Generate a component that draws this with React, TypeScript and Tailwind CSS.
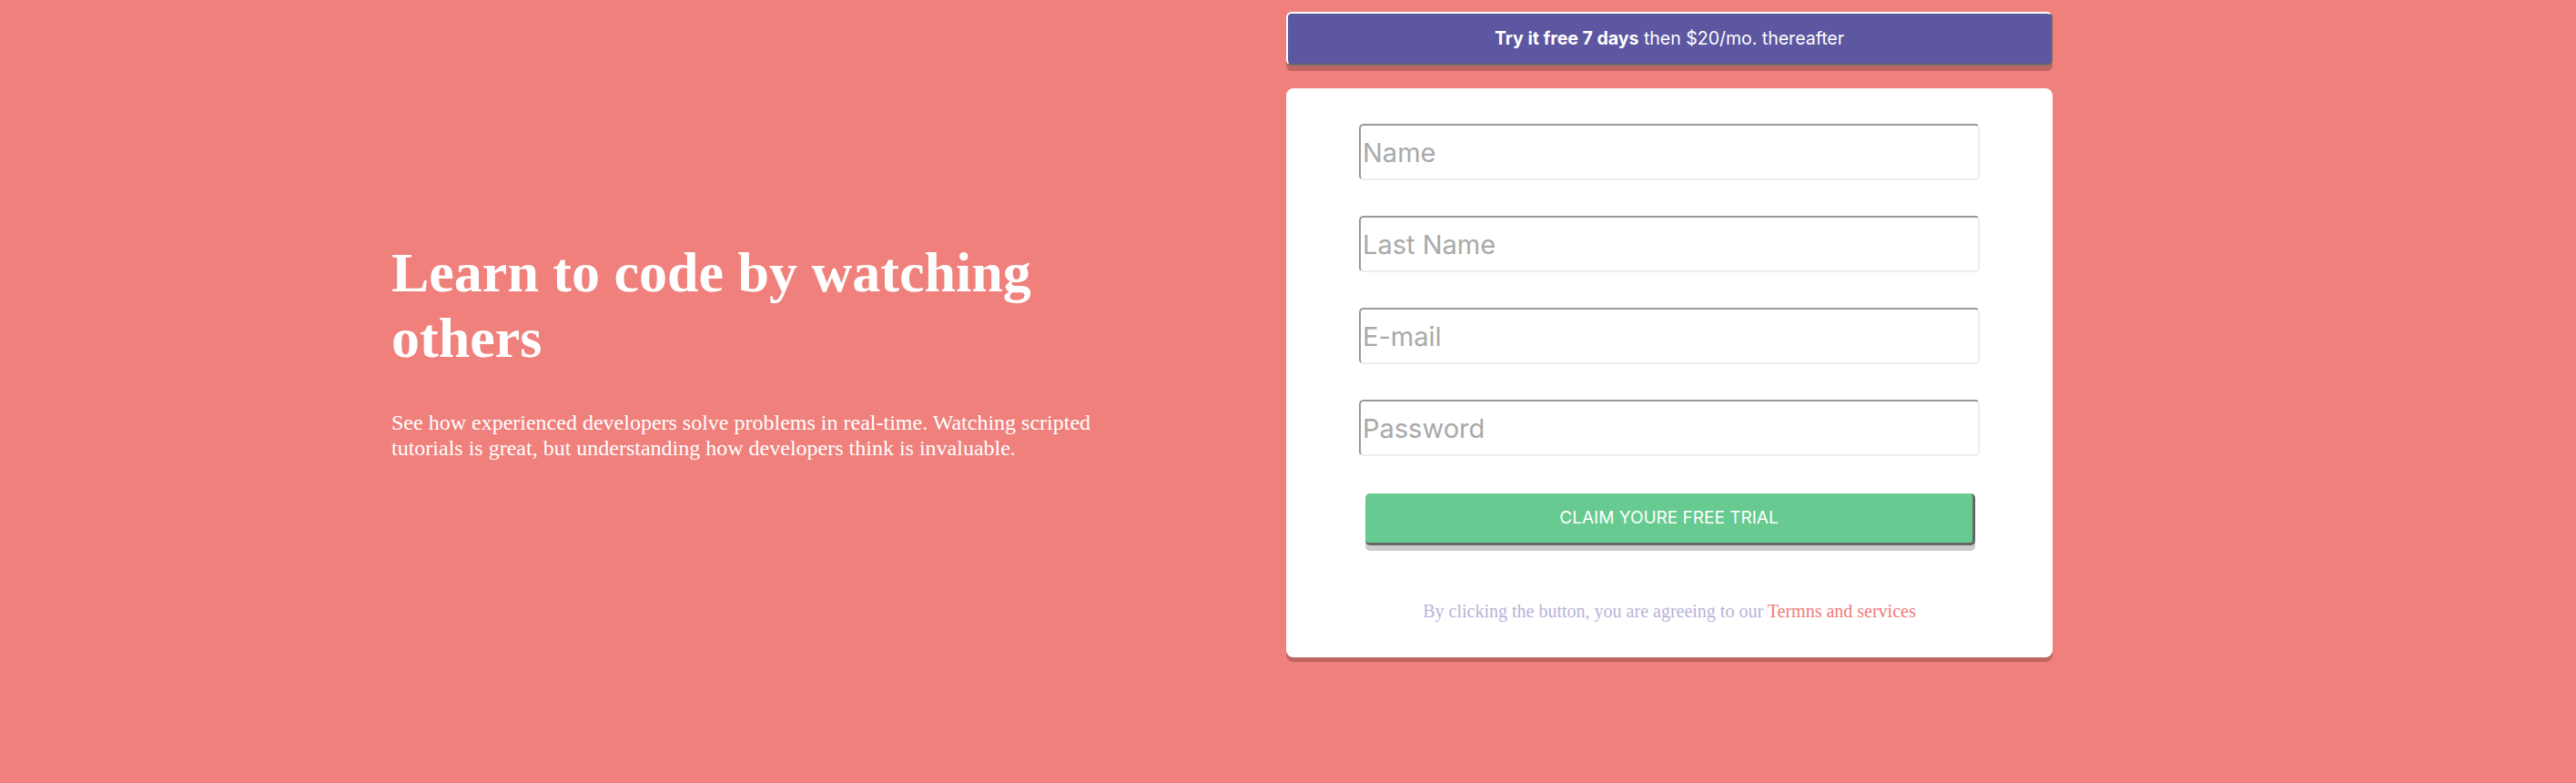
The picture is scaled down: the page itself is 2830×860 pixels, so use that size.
const fields = ["Name", "Last Name", "E-mail", "Password"];

const Field = ({ placeholder }: { placeholder: string }) => (
  <input
    type="text"
    placeholder={placeholder}
    className="block h-[62px] w-full rounded-[5px] border-2 border-t-[#9a9a9a] border-l-[#9a9a9a] border-r-[#ededed] border-b-[#ededed] bg-white px-[2px] font-['Inter',sans-serif] text-[29px] text-gray-700 placeholder:text-[#a9a9a9] outline-none"
  />
);

export default function App() {
  return (
    <div className="flex min-h-[860px] w-full items-start bg-[#ef807c]">
      <div className="ml-[430px] w-[800px] pt-[263px] font-['Liberation_Serif',serif] text-white">
        <h1 className="mb-[43px] text-[62px] font-bold leading-[72px]">
          Learn to code by watching others
        </h1>
        <p className="text-[24px] leading-[28px]">
          See how experienced developers solve problems in real-time. Watching
          scripted tutorials is great, but understanding how developers think is
          invaluable.
        </p>
      </div>

      <div className="ml-[183px] w-[842px] pt-[13px]">
        <div className="flex h-[59px] items-center justify-center rounded-[6px] border-2 border-t-white border-l-white border-r-[#6b6b6b] border-b-[#6b6b6b] bg-[#5d56a0] font-['Inter',sans-serif] text-[19.5px] text-white shadow-[0_6px_0_rgba(0,0,0,0.2)]">
          <span>
            <span className="font-bold">Try it free 7 days</span> then
            $20/mo. thereafter
          </span>
        </div>

        <div className="mt-[25px] rounded-[8px] bg-white px-[80px] pt-[39px] pb-[39px] shadow-[0_5px_0_rgba(0,0,0,0.2)]">
          <div className="flex flex-col gap-[39px]">
            {fields.map((f) => (
              <Field key={f} placeholder={f} />
            ))}
          </div>
          <button className="mt-[41px] ml-[7px] flex h-[57px] w-[670px] items-center justify-center rounded-[5px] border-r-[3px] border-b-[3px] border-[#666] bg-[#67ca90] font-['Inter',sans-serif] text-[19px] uppercase text-white shadow-[0_6px_0_rgba(0,0,0,0.2)]">
            Claim youre free trial
          </button>
          <p className="mt-[61px] text-center font-['Liberation_Serif',serif] text-[20px] leading-[23px] text-[#b7b3d8]">
            By clicking the button, you are agreeing to our{" "}
            <a className="text-[#f07b7b]">Termns and services</a>
          </p>
        </div>
      </div>
    </div>
  );
}
